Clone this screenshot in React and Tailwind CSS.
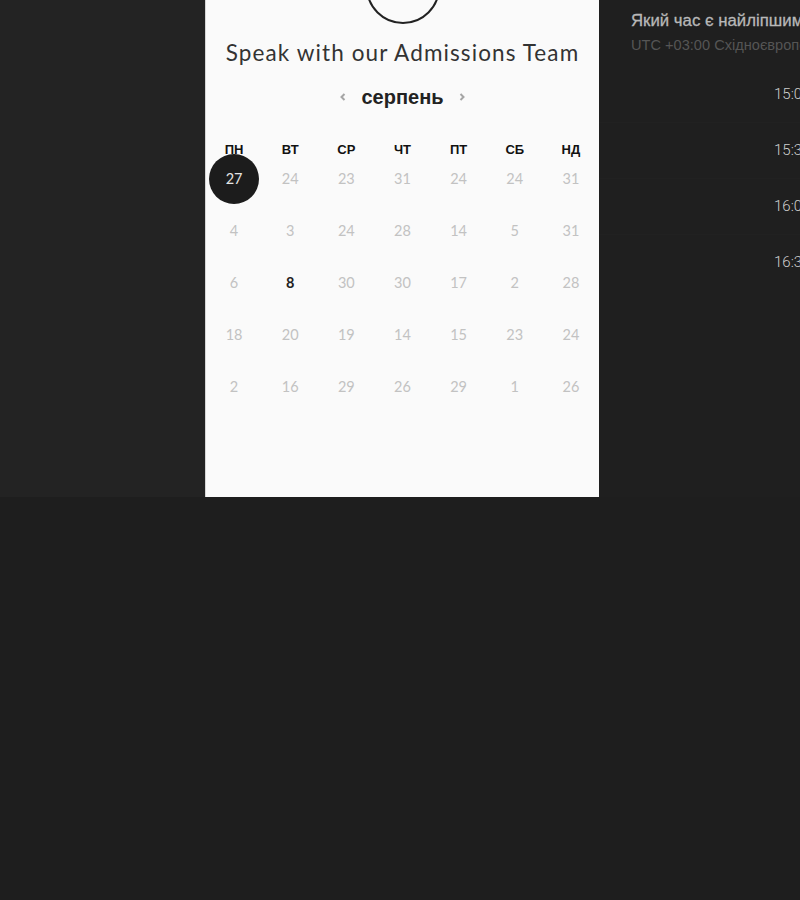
import { useState } from "react";

const weekDays = ["пн", "вт", "ср", "чт", "пт", "сб", "нд"];

const weeks = [
    [27, 24, 23, 31, 24, 24, 31],
    [4, 3, 24, 28, 14, 5, 31],
    [6, 8, 30, 30, 17, 2, 28],
    [18, 20, 19, 14, 15, 23, 24],
    [2, 16, 29, 26, 29, 1, 26],
];

const times = ["15:00", "15:30", "16:00", "16:30"];

function Chevron({ dir }) {
    return (
        <svg width="10" height="12" viewBox="0 0 10 12" className="text-[#a5a5a5]">
            <path
                d={ dir === "left" ? "M6.5 3 L3.5 6 L6.5 9" : "M3.5 3 L6.5 6 L3.5 9" }
                fill="none"
                stroke="currentColor"
                strokeWidth="2"
            />
        </svg>
    );
}

export default function App() {
    const [selected, setSelected] = useState("0-0");

    return (
        <div className="min-h-[900px] bg-[#1e1e1e] font-['Liberation_Sans',sans-serif]">
            <div className="flex h-[497px]">
                {/* left column */}
                <div className="w-[205px] bg-[#232323]" />

                {/* calendar card */}
                <div className="flex w-[394px] flex-col items-center overflow-hidden border-l border-[#d6d6d6] bg-[#fafafa]">
                    <div className="-mt-[50px] h-[74px] w-[74px] shrink-0 rounded-full border-2 border-[#222]" />

                    <h1 className="mt-[14px] font-['Lato',sans-serif] text-[22.5px] leading-[30px] tracking-[1.1px] text-[#333]">
                        Speak with our Admissions Team
                    </h1>

                    <div className="mt-[15px] flex h-[28px] items-center gap-[13px]">
                        <Chevron dir="left" />
                        <span className="text-[20px] font-bold leading-none text-[#222]">серпень</span>
                        <Chevron dir="right" />
                    </div>

                    <div className="mt-[29px] grid w-full grid-cols-7">
                        { weekDays.map((d) => (
                            <div
                                key={ d }
                                className="flex h-[20px] items-center justify-center text-[13px] font-bold uppercase text-[#111]"
                            >
                                { d }
                            </div>
                        )) }
                    </div>

                    <div className="-mt-[7px] grid w-full grid-cols-7">
                        { weeks.map((week, wi) =>
                            week.map((day, di) => {
                                const key = `${wi}-${di}`;
                                const isSelected = key === selected;
                                const isToday = wi === 2 && di === 1;
                                return (
                                    <div key={ key } className="flex h-[52px] items-center justify-center">
                                        <button
                                            onClick={ () => setSelected(key) }
                                            className={
                                                isSelected
                                                    ? "flex h-[50px] w-[50px] items-center justify-center rounded-full bg-[#1c1c1c] font-['Lato',sans-serif] text-[14.5px] text-[#e4e4e4]"
                                                    : isToday
                                                        ? "flex h-[50px] w-[50px] items-center justify-center font-['Lato',sans-serif] text-[14.5px] font-bold text-[#222]"
                                                        : "flex h-[50px] w-[50px] items-center justify-center font-['Lato',sans-serif] text-[14.5px] text-[#c2c2c2]"
                                            }
                                        >
                                            { day }
                                        </button>
                                    </div>
                                );
                            })
                        ) }
                    </div>
                </div>

                {/* time slots */}
                <div className="flex-1 overflow-hidden whitespace-nowrap bg-[#1f1f1f]">
                    <div className="pl-[32px] pt-[11px]">
                        <p className="text-[16.8px] leading-[20px] text-[#b8b8b8] [-webkit-text-stroke:0.3px_#b8b8b8]">
                            Який час є найліпшим для вас?
                        </p>
                        <p className="mt-[5px] text-[14.6px] leading-[18px] text-[#555]">
                            UTC +03:00 Східноєвропейський час
                        </p>
                    </div>

                    <div className="mt-[12px] font-['Roboto',sans-serif]">
                        { times.map((t, i) => (
                            <div
                                key={ t }
                                className={
                                    i === 0
                                        ? "flex h-[56px] items-center pl-[175px] text-[15px] font-light text-[#d0d0d0]"
                                        : "flex h-[56px] items-center border-t border-[#212121] pl-[175px] text-[15px] font-light text-[#d0d0d0]"
                                }
                            >
                                { t }
                            </div>
                        )) }
                    </div>
                </div>
            </div>
        </div>
    );
}
